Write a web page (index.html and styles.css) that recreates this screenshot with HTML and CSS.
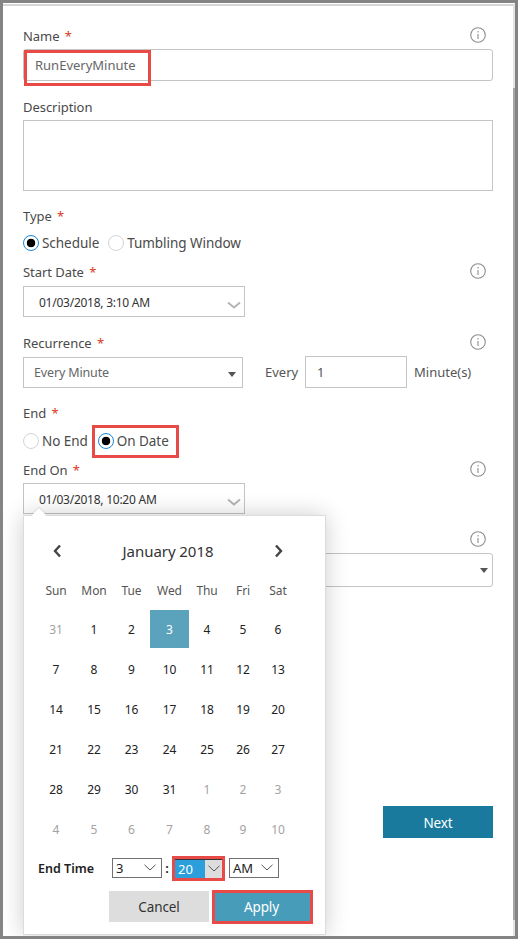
FILE: index.html
```html
<!DOCTYPE html>
<html lang="en">
<head>
<meta charset="utf-8">
<title>New Trigger</title>
<link rel="stylesheet" href="styles.css">
</head>
<body>
<main class="frame">
  <div class="topline"></div>
  <span class="scroll-thumb"></span>
  <form class="form">
    <div class="field name-field">
      <div class="label-row"><label class="label">Name <span class="req">*</span></label>
        <svg class="info" viewBox="0 0 16 16"><circle cx="8" cy="8" r="7.3"/><path d="M8 4v1.6M8 7v5"/></svg></div>
      <div class="input text-input rounded">RunEveryMinute<span class="mark mark-name"></span></div>
    </div>
    <div class="field desc-field">
      <div class="label-row"><label class="label">Description</label></div>
      <div class="input textarea"></div>
    </div>
    <div class="field type-field">
      <div class="label-row"><label class="label">Type <span class="req">*</span></label></div>
      <div class="radios r-type">
        <span class="radio on"></span><span class="radio-text">Schedule</span>
        <span class="radio"></span><span class="radio-text">Tumbling Window</span>
      </div>
    </div>
    <div class="field start-field">
      <div class="label-row"><label class="label">Start Date <span class="req">*</span></label>
        <svg class="info" viewBox="0 0 16 16"><circle cx="8" cy="8" r="7.3"/><path d="M8 4v1.6M8 7v5"/></svg></div>
      <div class="input date-input">01/03/2018, 3:10 AM
        <svg class="chev" viewBox="0 0 14 8"><path d="M1 1.5 7 6.5 13 1.5"/></svg></div>
    </div>
    <div class="field rec-field">
      <div class="label-row"><label class="label">Recurrence <span class="req">*</span></label>
        <svg class="info" viewBox="0 0 16 16"><circle cx="8" cy="8" r="7.3"/><path d="M8 4v1.6M8 7v5"/></svg></div>
      <div class="rec-row">
        <div class="input select-input">Every Minute<span class="caret"></span></div>
        <span class="every">Every</span>
        <div class="input num-input">1</div>
        <span class="unit">Minute(s)</span>
      </div>
    </div>
    <div class="field end-field">
      <div class="label-row"><label class="label">End <span class="req">*</span></label></div>
      <div class="radios r-end">
        <span class="radio"></span><span class="radio-text">No End</span>
        <span class="radio on"></span><span class="radio-text">On Date</span>
        <span class="mark mark-date"></span>
      </div>
    </div>
    <div class="field endon-field">
      <div class="label-row"><label class="label">End On <span class="req">*</span></label>
        <svg class="info" viewBox="0 0 16 16"><circle cx="8" cy="8" r="7.3"/><path d="M8 4v1.6M8 7v5"/></svg></div>
      <div class="input date-input endon-input">01/03/2018, 10:20 AM
        <svg class="chev" viewBox="0 0 14 8"><path d="M1 1.5 7 6.5 13 1.5"/></svg>
      </div>

      <div class="popup">
        <span class="notch"></span>
        <div class="cal-head">
          <svg class="nav" viewBox="0 0 10 14"><path d="M8 1.5 3 7l5 5.5"/></svg>
          <span class="month">January 2018</span>
          <svg class="nav" viewBox="0 0 10 14"><path d="M2 1.5 7 7l-5 5.5"/></svg>
        </div>
        <div class="cal-grid">
          <span class="dow">Sun</span><span class="dow">Mon</span><span class="dow">Tue</span><span class="dow">Wed</span><span class="dow">Thu</span><span class="dow">Fri</span><span class="dow">Sat</span>
          <span class="day dim">31</span><span class="day">1</span><span class="day">2</span><span class="day sel">3</span><span class="day">4</span><span class="day">5</span><span class="day">6</span>
          <span class="day">7</span><span class="day">8</span><span class="day">9</span><span class="day">10</span><span class="day">11</span><span class="day">12</span><span class="day">13</span>
          <span class="day">14</span><span class="day">15</span><span class="day">16</span><span class="day">17</span><span class="day">18</span><span class="day">19</span><span class="day">20</span>
          <span class="day">21</span><span class="day">22</span><span class="day">23</span><span class="day">24</span><span class="day">25</span><span class="day">26</span><span class="day">27</span>
          <span class="day">28</span><span class="day">29</span><span class="day">30</span><span class="day">31</span><span class="day dim">1</span><span class="day dim">2</span><span class="day dim">3</span>
          <span class="day dim">4</span><span class="day dim">5</span><span class="day dim">6</span><span class="day dim">7</span><span class="day dim">8</span><span class="day dim">9</span><span class="day dim">10</span>
        </div>
        <div class="time-row">
          <span class="time-label">End Time</span>
          <span class="mini mini-h">3<svg class="mini-chev" viewBox="0 0 12 7"><path d="M.5 .8 6 6l5.5-5.2"/></svg></span>
          <span class="colon">:</span>
          <span class="mini-mark">
            <span class="mini mini-m"><span class="mini-sel">20</span><span class="mini-btn"><svg class="mini-chev" viewBox="0 0 12 7"><path d="M.5 .8 6 6l5.5-5.2"/></svg></span></span>
          </span>
          <span class="mini mini-a">AM<svg class="mini-chev" viewBox="0 0 12 7"><path d="M.5 .8 6 6l5.5-5.2"/></svg></span>
        </div>
        <div class="actions">
          <button type="button" class="btn cancel">Cancel</button>
          <button type="button" class="btn apply">Apply</button>
        </div>
      </div>
    </div>
    <div class="field hidden-field">
      <div class="label-row"><span class="label"></span>
        <svg class="info" viewBox="0 0 16 16"><circle cx="8" cy="8" r="7.3"/><path d="M8 4v1.6M8 7v5"/></svg></div>
      <div class="input status-input rounded"><span class="caret"></span></div>
    </div>
    <div class="footer"><button type="button" class="btn next">Next</button></div>
  </form>
</main>
</body>
</html>
```
FILE: styles.css
```css
* { box-sizing: border-box; }
html, body { margin: 0; padding: 0; }
body { width: 518px; height: 939px; overflow: hidden; background: #fff; font-family: "Noto Sans", "Open Sans", sans-serif; }
.frame { position: relative; width: 518px; height: 939px; border: 3px solid #848484; background: #fff; overflow: hidden; }
.topline { height: 2px; margin-top: 1px; background: #d6d6d6; }
.scroll-thumb { position: absolute; right: 0; top: 2px; bottom: 0; width: 2px; background: linear-gradient(#e4e4e4 0 83px, #a6a6a6 83px 915px, #e4e4e4 915px); }
.form { padding: 21px 0 0 20px; width: 490px; }
.field { position: relative; width: 470px; }
.label-row { display: flex; justify-content: space-between; align-items: center; height: 18px; padding-right: 7px; }
.label { font-size: 13px; line-height: 18px; color: #4a4a4a; letter-spacing: -0.05px; }
.req { color: #d8391c; margin-left: 2px; }
.info { width: 16px; height: 16px; margin-top: -2px; fill: none; stroke: #8d8d8d; stroke-width: 1.1; }
.input { position: relative; border: 1px solid #c4c4c4; background: #fff; font-size: 13px; color: #666; display: flex; align-items: center; }
.rounded { border-radius: 3px; }
.text-input { height: 32px; margin-top: 4px; padding-left: 11px; letter-spacing: 0; }
.desc-field { margin-top: 17px; }
.textarea { height: 71px; margin-top: 4px; }
.type-field { margin-top: 16px; }
.radios { position: relative; display: flex; align-items: center; height: 20px; font-size: 13.5px; color: #4a4a4a; letter-spacing: -0.05px; }
.r-type { margin-top: 8px; }
.r-end { margin-top: 9px; }
.radio { display: block; width: 16px; height: 16px; border-radius: 50%; border: 1px solid #d4d4d4; background: #fff; flex: none; }
.radio.on { border-color: #1b87d8; background: radial-gradient(circle, #000 0 4px, #fff 4.6px); }
.radio-text { margin: 0 9px 0 3px; }
.r-end .radio-text { margin-right: 10px; }
.start-field { margin-top: 10px; }
.date-input { width: 222px; height: 31px; margin-top: 5px; padding: 1px 0 0 15px; font-size: 12px; color: #333; letter-spacing: -0.25px; }
.chev { position: absolute; right: 3px; top: 14px; width: 14px; height: 8px; fill: none; stroke: #b4b4b4; stroke-width: 2; }
.rec-field { margin-top: 17px; }
.rec-row { display: flex; align-items: center; margin-top: 4px; height: 32px; font-size: 13px; color: #555; letter-spacing: 0; }
.select-input { width: 220px; height: 31px; padding-left: 10px; font-size: 12.5px; color: #666; letter-spacing: -0.15px; }
.caret { position: absolute; right: 6px; top: 14px; width: 0; height: 0; border: 4.5px solid transparent; border-top: 5px solid #555; border-bottom: 0; }
.every { margin-left: 22px; width: 40px; }
.num-input { width: 102px; height: 32px; padding-left: 11px; margin-right: 7px; color: #555; }
.end-field { margin-top: 16px; }
.endon-field { margin-top: 10px; }
.endon-input { margin-top: 4px; }
.mark { position: absolute; border: 3px solid #e84a47; pointer-events: none; }
.mark-name { left: 0; top: 0; width: 127px; height: 36px; }
.mark-date { left: 69px; top: -6px; width: 87px; height: 33px; }
.hidden-field { margin-top: 17px; }
.status-input { height: 34px; margin-top: 4px; }
.status-input .caret { top: 14px; right: 4px; }
.footer { display: flex; justify-content: flex-end; margin-top: 219px; }
.btn { border: 0; font-family: inherit; font-size: 13.5px; letter-spacing: -0.1px; padding: 1px 0 0; }
.next { width: 110px; height: 32px; background: #1a7a9e; color: #fff; }

.popup { position: absolute; z-index: 5; left: 0; top: 54px; width: 303px; height: 420px; background: #fff; border: 1px solid #dcdcdc; box-shadow: 0 0 22px rgba(0,0,0,.2); }
.notch { position: absolute; left: 10px; top: -6px; width: 10px; height: 10px; background: #fff; transform: rotate(45deg); box-shadow: -1px -1px 1px rgba(0,0,0,.08); }
.cal-head { display: flex; align-items: center; height: 22px; margin: 24px 0 0 28px; width: 232px; justify-content: space-between; }
.nav { width: 10px; height: 14px; fill: none; stroke: #444; stroke-width: 2.4; }
.month { font-size: 15px; color: #333; letter-spacing: -0.05px; }
.cal-grid { display: grid; grid-template-columns: 38px 38px 37px 39px 36px 36px 34px; grid-auto-rows: 40px; grid-template-rows: 37px; margin: 10px 0 0 13px; width: 258px; }
.dow { display: flex; align-items: center; justify-content: center; font-size: 12px; color: #555; letter-spacing: -0.1px; }
.day { display: flex; align-items: center; justify-content: center; font-size: 12px; color: #222; }
.dim { color: #a3a3a3; }
.sel { background: #5ba3bd; color: #fff; margin: 1px 0; }
.time-row { display: flex; align-items: center; height: 26px; margin: 6px 0 0 14px; font-size: 13px; }
.time-label { width: 74px; font-weight: 600; color: #222; font-size: 12.5px; letter-spacing: 0; }
.mini { position: relative; display: flex; align-items: center; height: 20px; width: 50px; border: 1px solid #707070; font-size: 13px; color: #222; padding-left: 3px; background: #fff; }
.mini-chev { position: absolute; right: 5px; top: 5px; width: 12px; height: 7px; fill: none; stroke: #555; stroke-width: 1; }
.colon { width: 10px; text-align: center; font-weight: 600; color: #222; }
.mini-mark { display: flex; border: 3px solid #e84a47; height: 25px; width: 53px; margin-right: 4px; }
.mini-m { width: 47px; height: 19px; border: 0; border-top: 1px solid #333; padding: 0; }
.mini-sel { width: 30px; height: 18px; background: #2a9fdc; color: #fff; padding-left: 3px; line-height: 18px; margin-left: 0; }
.mini-btn { position: relative; flex: 1; height: 18px; background: #ddd; }
.mini-btn .mini-chev { right: 2px; }
.actions { display: flex; align-items: flex-start; margin: 9px 0 0 85px; }
.cancel { width: 100px; height: 31px; margin-top: 1px; background: #ddd; color: #333; }
.apply { width: 101px; height: 34px; margin-left: 3px; background: #479cb9; color: #fff; border: 3px solid #e84a47; padding: 0 2px 0 0; }
```
